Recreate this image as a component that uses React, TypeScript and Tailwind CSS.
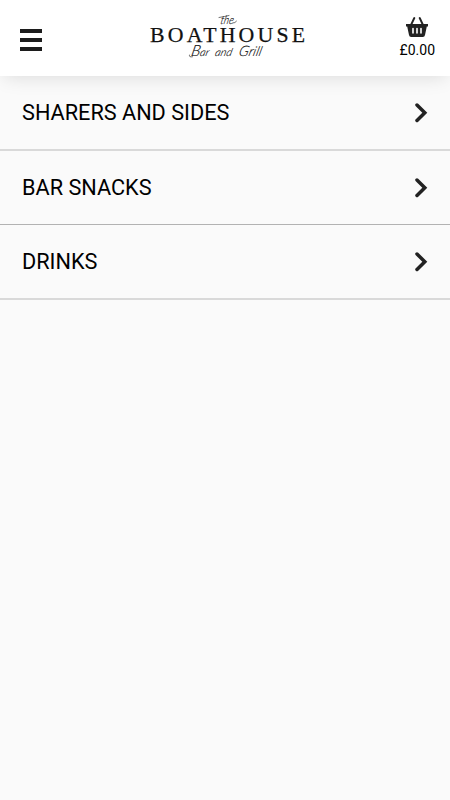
interface Category {
  id: number;
  name: string;
  line: string;
}

const categories: Category[] = [
  { id: 1, name: "SHARERS AND SIDES", line: "h-[75px] border-b-2 border-[#d9d9d9]" },
  { id: 2, name: "BAR SNACKS", line: "h-[74px] border-b border-[#b2b2b2]" },
  { id: 3, name: "DRINKS", line: "h-[75px] border-b-2 border-[#d9d9d9]" },
];

function MenuIcon() {
  return (
    <span className="flex w-[22px] flex-col gap-[5px]">
      <span className="h-1 bg-[#1c1c1c]" />
      <span className="h-1 bg-[#1c1c1c]" />
      <span className="h-1 bg-[#1c1c1c]" />
    </span>
  );
}

function Logo() {
  return (
    <svg width="160" height="52" viewBox="0 0 160 52" fill="#111" role="img">
      <g fontStyle="italic" fontWeight="300" fontFamily="Lato, sans-serif" stroke="#111" strokeWidth=".15">
        <text transform="translate(73 14.500) skewX(-12)" textLength="13" lengthAdjust="spacingAndGlyphs" fontSize="12">
          the
        </text>
        <text transform="translate(43.500 47) skewX(-12)" fontSize="15.500">
          B<tspan fontSize="11">ar</tspan>
        </text>
        <text transform="translate(67.500 46.500) skewX(-14)" fontSize="11">
          and
        </text>
        <text transform="translate(91 47) skewX(-14)" fontSize="14.500">
          G<tspan fontSize="13.500">rill</tspan>
        </text>
      </g>
      <text x="3" y="33" textLength="155" lengthAdjust="spacing" fontSize="21.800" stroke="#111" strokeWidth=".25" fontFamily="'Liberation Serif', serif">
        BOATHOUSE
      </text>
      {/* pen strokes around the handwritten words */}
      <path d="M72 8.500q6-1 10-2M86 14q2 .2 3.500-1.800M42.500 46q-1 2.500 3 1.800" fill="none" stroke="#111" strokeWidth=".6" strokeLinecap="round" />
    </svg>
  );
}

function BasketIcon() {
  return (
    <svg width="22" height="21" viewBox="0 0 22 21" fill="none">
      <path d="M5 8 8.300 1M17 8 13.700 1" stroke="#222" strokeWidth="1.900" strokeLinecap="round" />
      <path d="M0 7h22v2.500h-1.200L19 18q-.3 2-2.200 2H5.200Q3.300 20 3 18L1.200 9.500H0z" fill="#222" />
      <path d="M7 11.500v4.500M11 11.500v4.500M15 11.500v4.500" stroke="#fff" strokeWidth="1.600" strokeLinecap="round" />
    </svg>
  );
}

function ChevronIcon() {
  return (
    <svg width="14" height="20" viewBox="0 0 14 20" fill="none">
      <path d="M3 2 10.800 9.700 3 17.500" stroke="#222" strokeWidth="3.500" strokeLinecap="round" />
    </svg>
  );
}

export default function App() {
  return (
    <div className="min-h-screen bg-[#fafafa] font-[Roboto,sans-serif] text-black">
      <header className="flex h-19 items-start justify-between bg-white pr-[15px] pl-[20px] shadow-[0_5px_18px_-4px_rgba(0,0,0,0.13)]">
        <button className="mt-[29px]" aria-label="Menu">
          <MenuIcon />
        </button>
        <div className="mt-[9px] ml-[13px]">
          <Logo />
        </div>
        <button className="mt-[17px] flex flex-col items-center" aria-label="Basket">
          <BasketIcon />
          <span className="mt-[3px] text-[14px] leading-[19px]">£0.00</span>
        </button>
      </header>

      <ul>
        {categories.map((category) => (
          <li key={category.id} className={`flex items-center justify-between px-[22px] ${category.line}`}>
            <span className="pt-0.5 text-[21.700px]">{category.name}</span>
            <ChevronIcon />
          </li>
        ))}
      </ul>
    </div>
  );
}
